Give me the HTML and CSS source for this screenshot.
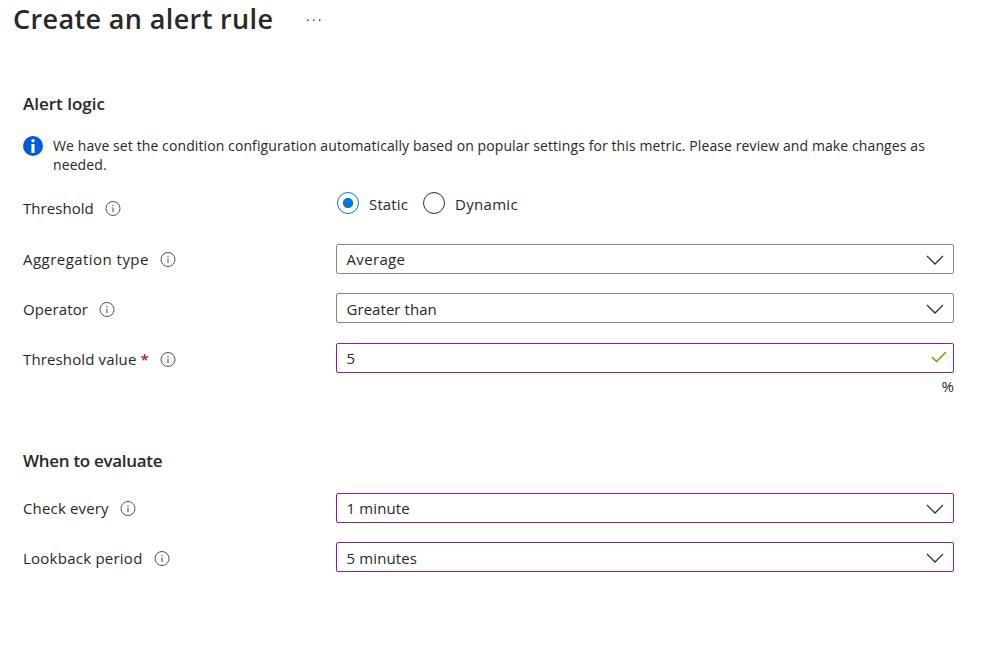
FILE: index.html
```html
<!DOCTYPE html>
<html lang="en">
<head>
<meta charset="utf-8">
<title>Create an alert rule</title>
<link rel="stylesheet" href="styles.css">
</head>
<body>
<svg width="0" height="0" class="defs">
  <symbol id="info" viewBox="0 0 16 16"><circle cx="8" cy="8.5" r="7" fill="none" stroke="#555351" stroke-width="1"/><path d="M8 7.5v4.5M8 5v1.2" fill="none" stroke="#555351" stroke-width="1.1"/></symbol>
  <symbol id="chevron" viewBox="0 0 18 10"><path d="M1 1l8 8 8-8" fill="none" stroke="#323130" stroke-width="1.25"/></symbol>
</svg>
<header class="header">
  <h1 class="title">Create an alert rule</h1>
  <svg class="more" width="16" height="4" viewBox="0 0 16 4"><path d="M1 2.6h1.4V4H1zM7 2.6h1.4V4H7zM13 2.6h1.4V4H13z" fill="#323130"/></svg>
</header>
<main class="form">
  <h2 class="section section-logic">Alert logic</h2>
  <div class="notice">
    <svg class="notice-icon" width="20" height="20" viewBox="0 0 20 20"><circle cx="10" cy="10" r="10" fill="#015cda"/><circle cx="10" cy="4.8" r="1.7" fill="#fff"/><path d="M8.4 8h3.2v9H8.4z" fill="#fff"/></svg>
    <p class="notice-text">We have set the condition configuration automatically based on popular settings for this metric. Please review and make changes as<br>needed.</p>
  </div>
  <div class="row row-threshold">
    <div class="label"><span class="t-threshold">Threshold</span><svg class="info"><use href="#info"/></svg></div>
    <div class="radios">
      <span class="radio radio-on"></span><span class="radio-text t-static">Static</span>
      <span class="radio"></span><span class="radio-text t-dynamic">Dynamic</span>
    </div>
  </div>
  <div class="row row-aggregation">
    <div class="label"><span class="t-aggregation">Aggregation type</span><svg class="info"><use href="#info"/></svg></div>
    <div class="field"><span class="t-average">Average</span><svg class="chevron"><use href="#chevron"/></svg></div>
  </div>
  <div class="row row-operator">
    <div class="label low"><span class="t-operator">Operator</span><svg class="info"><use href="#info"/></svg></div>
    <div class="field"><span class="t-greater low">Greater than</span><svg class="chevron"><use href="#chevron"/></svg></div>
  </div>
  <div class="row row-value">
    <div class="label low"><span class="t-value">Threshold value</span><span class="required">*</span><svg class="info"><use href="#info"/></svg></div>
    <div class="field edited field-input"><span>5</span><svg class="check" viewBox="0 0 16 12"><path d="M1 6l4.5 4.5L15 1" fill="none" stroke="#57a300" stroke-width="1.4"/></svg></div>
  </div>
  <div class="unit">%</div>
  <h2 class="section section-when">When to evaluate</h2>
  <div class="row row-check">
    <div class="label"><span class="t-check">Check every</span><svg class="info"><use href="#info"/></svg></div>
    <div class="field edited"><span class="t-minute">1 minute</span><svg class="chevron"><use href="#chevron"/></svg></div>
  </div>
  <div class="row row-lookback">
    <div class="label low"><span class="t-lookback">Lookback period</span><svg class="info"><use href="#info"/></svg></div>
    <div class="field edited"><span class="t-minute low">5 minutes</span><svg class="chevron"><use href="#chevron"/></svg></div>
  </div>
</main>
</body>
</html>
```
FILE: styles.css
```css
* { box-sizing: border-box; }
body { margin: 0; background: #fff; color: #292827; font: 15px/20px "Open Sans", "Noto Sans", sans-serif; white-space: nowrap; }
.defs { position: absolute; }
.header { display: flex; align-items: center; height: 38px; padding-left: 13px; gap: 33px; }
.title { margin: 0; width: 260px; font-size: 27px; line-height: 36px; font-weight: 600; letter-spacing: .37px; }
.form { width: 954px; padding-left: 23px; }
.section { margin: 0; font-size: 17px; line-height: 24px; font-weight: 600; }
.section-logic { margin-top: 54px; }
.notice { display: flex; gap: 10px; margin-top: 20px; }
.notice-icon { flex: none; }
.notice-text { margin: 0; font-size: 14px; line-height: 19px; letter-spacing: .1px; }
.row { display: grid; grid-template-columns: 313px 618px; align-items: center; height: 30px; }
.label { display: flex; align-items: center; }
.low { padding-top: 2px; }
.info { width: 16px; height: 16px; margin-left: 11px; }
.required { color: #a4262c; font-weight: 600; margin-left: 4px; }
.row-threshold { margin-top: 19px; }
.radios { display: flex; align-items: center; height: 22px; margin-top: -10px; padding-left: 1px; }
.radio { width: 22px; height: 22px; border: 1px solid #323130; border-radius: 50%; }
.radio-on { border-color: #0078d4; background: radial-gradient(circle, #0078d4 4.7px, #fff 5.5px); }
.radio-text { margin: 2px 0 0 10px; }
.t-threshold { letter-spacing: .05px; }
.t-static { width: 54px; letter-spacing: .15px; }
.t-dynamic { letter-spacing: .3px; }
.t-aggregation { letter-spacing: .46px; }
.t-operator { letter-spacing: .1px; }
.t-value { letter-spacing: .13px; }
.t-check { letter-spacing: .16px; }
.t-lookback { letter-spacing: .24px; }
.t-average { letter-spacing: .35px; }
.t-greater { letter-spacing: .05px; }
.t-minute { letter-spacing: .12px; }
.row-aggregation { margin-top: 21px; }
.row-operator { margin-top: 19px; }
.row-value { margin-top: 20px; }
.field { display: flex; align-items: center; justify-content: space-between; height: 30px; padding: 0 9px 0 9.5px; border: 1px solid #8a8886; border-radius: 2px; }
.edited { border-color: #881fa0; }
.field-input { padding-right: 6px; }
.chevron { width: 18px; height: 10px; margin-top: 2px; }
.check { width: 16px; height: 12px; margin-top: -2px; }
.unit { margin-top: 3px; text-align: right; }
.section-when { margin-top: 53px; letter-spacing: -.3px; }
.row-check { margin-top: 20px; }
.row-lookback { margin-top: 19px; }
```
